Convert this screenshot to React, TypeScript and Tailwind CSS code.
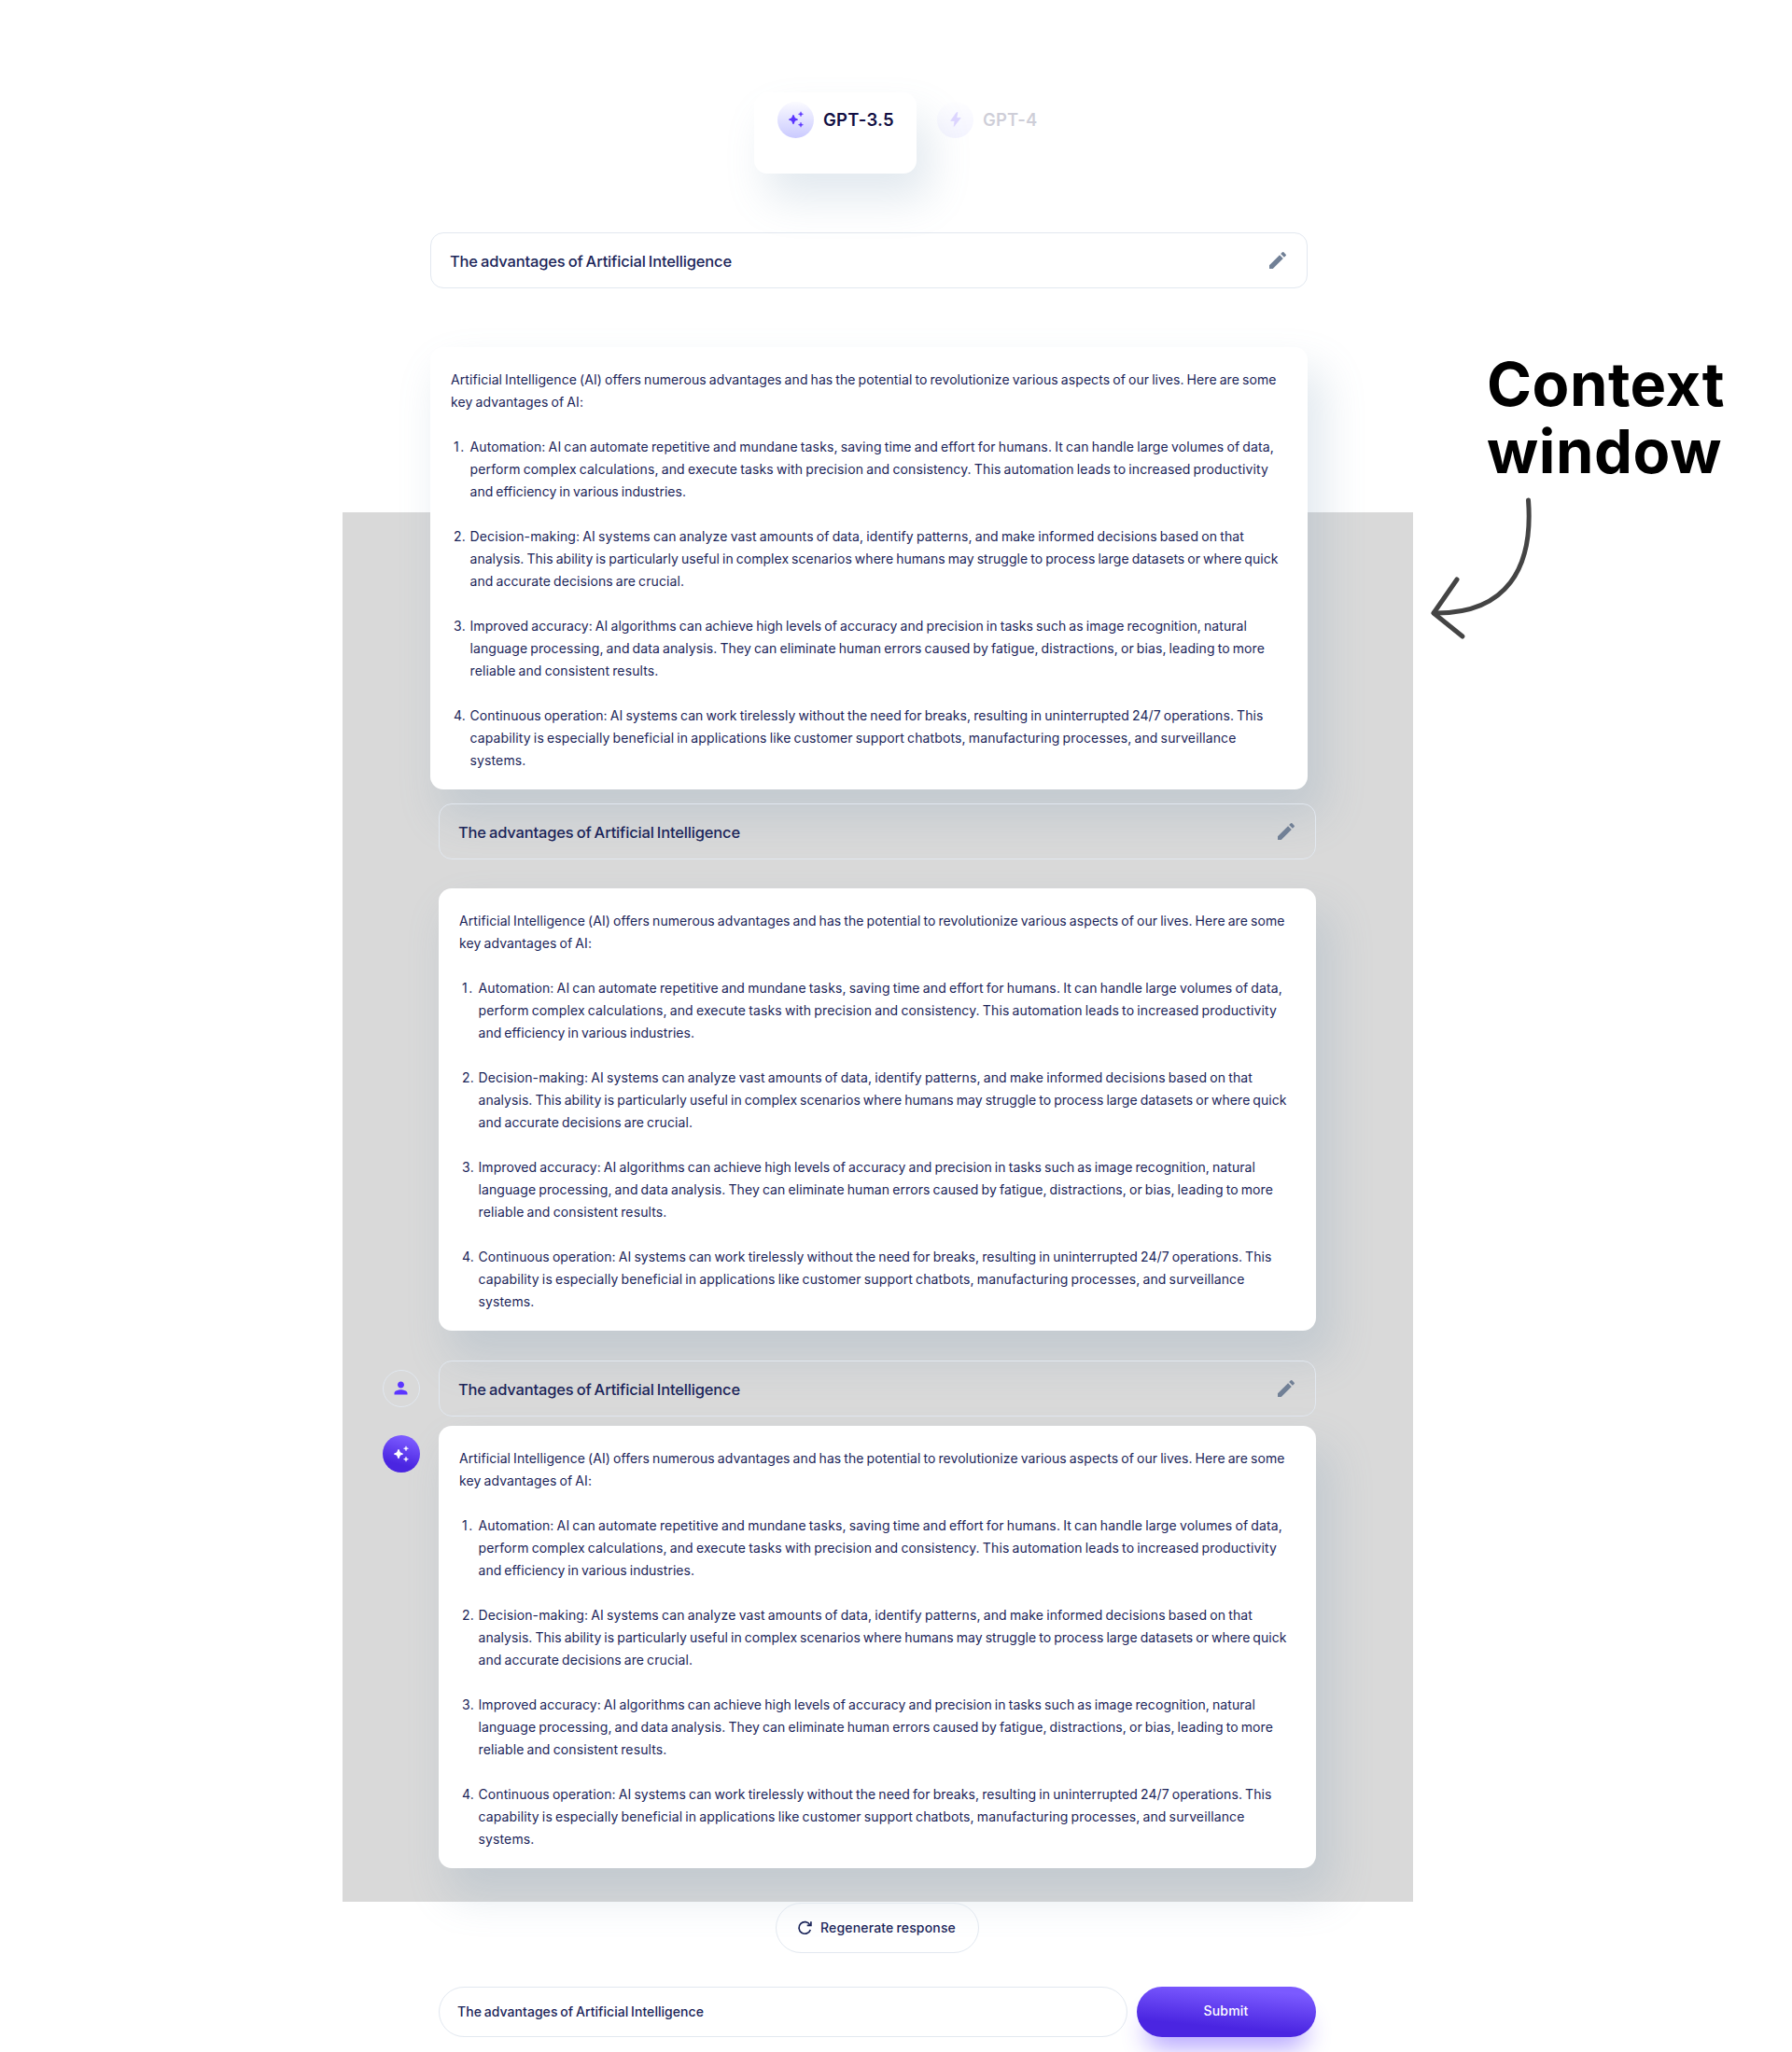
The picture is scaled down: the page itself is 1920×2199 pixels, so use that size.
import { useLayoutEffect, useRef, useState } from "react";
import { MdEdit, MdPerson } from "react-icons/md";

/** One line of text whose tracking is tuned so that it fills the given width. */
function Line({ text, width, className = "" }: { text: string; width: number; className?: string }) {
  const ref = useRef<HTMLSpanElement>(null);
  const [tracking, setTracking] = useState(0);
  useLayoutEffect(() => {
    if (!ref.current) return;
    const natural = ref.current.getBoundingClientRect().width - tracking * text.length;
    setTracking((width - natural) / text.length);
  }, [text, width]);
  return (
    <span className={`block w-max whitespace-nowrap [word-spacing:-0.07em] ${className}`}>
      <span ref={ref} style={{ letterSpacing: `${tracking}px` }}>
        {text}
      </span>
    </span>
  );
}

type TextLine = [string, number];

const intro: TextLine[] = [
  ["Artificial Intelligence (AI) offers numerous advantages and has the potential to revolutionize various aspects of our lives. Here are some", 884.5],
  ["key advantages of AI:", 142],
];

const points: TextLine[][] = [
  [
    ["Automation: AI can automate repetitive and mundane tasks, saving time and effort for humans. It can handle large volumes of data,", 861.5],
    ["perform complex calculations, and execute tasks with precision and consistency. This automation leads to increased productivity", 855.5],
    ["and efficiency in various industries.", 231.5],
  ],
  [
    ["Decision-making: AI systems can analyze vast amounts of data, identify patterns, and make informed decisions based on that", 829.5],
    ["analysis. This ability is particularly useful in complex scenarios where humans may struggle to process large datasets or where quick", 866],
    ["and accurate decisions are crucial.", 229.5],
  ],
  [
    ["Improved accuracy: AI algorithms can achieve high levels of accuracy and precision in tasks such as image recognition, natural", 832.5],
    ["language processing, and data analysis. They can eliminate human errors caused by fatigue, distractions, or bias, leading to more", 851.5],
    ["reliable and consistent results.", 202],
  ],
  [
    ["Continuous operation: AI systems can work tirelessly without the need for breaks, resulting in uninterrupted 24/7 operations. This", 850],
    ["capability is especially beneficial in applications like customer support chatbots, manufacturing processes, and surveillance", 821],
    ["systems.", 60],
  ],
];

function Sparkles({ className }: { className: string }) {
  return (
    <svg viewBox="0 0 20 20" className={className} fill="currentColor">
      <path d="M7 4.9c.35 0 .6.3.75.7l.95 2.4c.1.25.25.4.5.5l2.2.9c.4.15.6.35.6.65s-.2.5-.6.65l-2.2.9c-.25.1-.4.25-.5.5l-.95 2.4c-.15.4-.4.7-.75.7s-.6-.3-.75-.7L5.300 12.1c-.1-.25-.25-.4-.5-.5l-2.200-.9c-.4-.15-.6-.35-.6-.65s.2-.5.6-.65l2.200-.9c.25-.1.4-.25.5-.5l.95-2.4c.15-.4.4-.7.75-.7z" />
      <path d="M15 1.700l.75 1.800 1.850.8-1.850.8L15 6.900l-.75-1.800-1.850-.8 1.850-.8zM15 13.100l.75 1.800 1.850.8-1.850.8-.75 1.800-.75-1.800-1.850-.8 1.850-.8z" stroke="currentColor" strokeWidth=".4" strokeLinejoin="round" />
    </svg>
  );
}

function Bolt({ className }: { className: string }) {
  return (
    <svg viewBox="0 0 12 16" className={className} fill="currentColor" stroke="currentColor" strokeWidth=".8" strokeLinejoin="round">
      <path d="M7.900.6L6.700 6.400H11.200L4.100 15.400L5.100 9.400H.7L7 .6z" />
    </svg>
  );
}

function Refresh({ className }: { className: string }) {
  return (
    <svg viewBox="0 0 16 16" className={className} fill="none" stroke="currentColor" strokeWidth="1.700">
      <path d="M14.300 9.900A6.300 6.300 0 1 1 13.800 4.800" />
      <path d="M14.900 1.300V5.400H10.700" />
    </svg>
  );
}

function PromptBar({ className = "" }: { className?: string }) {
  return (
    <div className={`flex h-[60px] w-[940px] items-center justify-between rounded-[14px] border border-[#E2E8F0] pl-5 pr-[19px] ${className}`}>
      <Line text="The advantages of Artificial Intelligence" width={302} className="pt-px text-[16.500px] font-medium leading-6" />
      <MdEdit className="size-6 text-[#718096]" />
    </div>
  );
}

function AnswerCard({ className = "" }: { className?: string }) {
  return (
    <article className={`relative z-10 h-[474px] w-[940px] rounded-[14px] bg-white px-[22px] pt-[23px] text-[14px] leading-6 shadow-[14px_27px_45px_4px_rgba(112,144,176,0.2)] ${className}`}>
      {intro.map(([text, width]) => (
        <Line key={text} text={text} width={width} />
      ))}
      <ol className="mt-6 flex flex-col gap-6">
        {points.map((lines, i) => (
          <li key={i} className="flex">
            <span className="w-[20.500px] shrink-0 pl-[3px]">
              <Line text={`${i + 1}.`} width={13} />
            </span>
            <div>
              {lines.map(([text, width]) => (
                <Line key={text} text={text} width={width} />
              ))}
            </div>
          </li>
        ))}
      </ol>
    </article>
  );
}

export default function App() {
  return (
    <div className="relative h-[2199px] w-[1920px] overflow-hidden bg-white font-['Inter',sans-serif] text-[#1B2559]">
      <header className="ml-[808px] flex pt-[99px] text-[#120F43]">
        <div className="flex h-[87px] w-[174px] items-start rounded-[14px] bg-white pl-[25px] pt-[9.500px] shadow-[14px_27px_45px_rgba(112,144,176,0.2)]">
          <span className="flex size-[39px] items-center justify-center rounded-full bg-[linear-gradient(180deg,#FBFBFF_0%,#CACAFF_100%)] text-[#5B35FF]">
            <Sparkles className="size-5" />
          </span>
          <Line text="GPT-3.5" width={76} className="ml-[10px] mt-[7.500px] text-[18.500px] font-semibold leading-6" />
        </div>
        <div className="ml-[22px] flex items-start pt-[9.500px] opacity-20">
          <span className="flex size-[39px] items-center justify-center rounded-full bg-[linear-gradient(180deg,#FBFBFF_0%,#CACAFF_100%)] text-[#5B35FF]">
            <Bolt className="h-4 w-3" />
          </span>
          <Line text="GPT-4" width={58.5} className="ml-[10px] mt-[7.500px] text-[18.500px] font-semibold leading-6" />
        </div>
      </header>

      <PromptBar className="ml-[461px] mt-[63px]" />
      <AnswerCard className="-mb-[297px] ml-[461px] mt-[63px]" />

      <section className="ml-[367px] h-[1489px] w-[1147px] bg-[#D9D9D9] pt-[312px]">
        <PromptBar className="relative z-10 ml-[103px]" />
        <AnswerCard className="ml-[103px] mt-[31px]" />
        <div className="relative z-10 ml-[43px] mt-[32px] flex gap-5">
          <span className="mt-[10px] flex size-10 items-center justify-center rounded-full border border-[#E2E8F0] pb-px pr-px text-[#5B35FF]">
            <MdPerson className="size-[21px]" />
          </span>
          <PromptBar />
        </div>
        <div className="ml-[43px] mt-[10px] flex gap-5">
          <span className="relative z-20 mt-[10px] flex size-10 items-center justify-center rounded-full bg-[linear-gradient(15.46deg,#4A25E1_26.3%,#7B5AFF_86.4%)] text-white">
            <Sparkles className="size-5" />
          </span>
          <AnswerCard />
        </div>
      </section>

      <footer className="relative z-10 ml-[470px] w-[940px] text-[14px] font-medium">
        <button className="ml-[361px] mt-[1px] flex h-[54px] w-[218px] items-center rounded-full border border-[#E2E8F0] pl-[22px]">
          <Refresh className="size-4" />
          <Line text="Regenerate response" width={145} className="ml-[9px] leading-6" />
        </button>
        <div className="mt-9 flex gap-[10px]">
          <div className="flex h-[54px] w-[738px] items-center rounded-full border border-[#E2E8F0] pb-px pl-[19px]">
            <Line text="The advantages of Artificial Intelligence" width={264} className="leading-6" />
          </div>
          <button className="flex h-[54px] w-[192px] items-center justify-center rounded-full bg-[linear-gradient(5deg,#4A25E1_26.3%,#7B5AFF_86.4%)] pb-[2px] pr-px text-white shadow-[0px_21px_27px_-10px_rgba(96,60,255,0.48)]">
            <Line text="Submit" width={48} className="leading-6" />
          </button>
        </div>
      </footer>

      <aside className="absolute left-[1532px] top-[376px] w-[330px] text-black">
        <h2 className="ml-[61px] text-[65px] font-bold leading-[72px]">
          <Line text="Context" width={255} />
          <Line text="window" width={252} />
        </h2>
        <svg className="mt-2 block h-[160px] w-[112px]" viewBox="1532 528 112 160" fill="none" stroke="#444444" strokeWidth="5" strokeLinecap="round" strokeLinejoin="round">
          <path d="M1637.500 536C1643 608 1615 658.500 1536 657" />
          <path d="M1561 621L1536 657L1567 682" />
        </svg>
      </aside>
    </div>
  );
}
